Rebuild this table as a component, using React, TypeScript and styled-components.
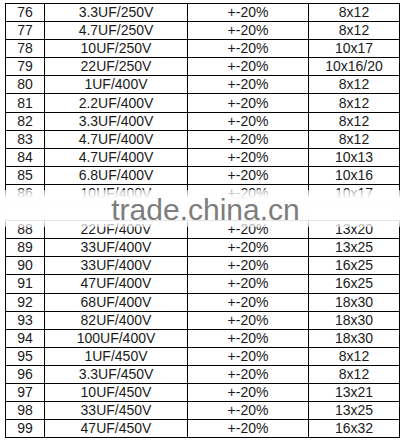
import React from 'react'
import styled, { createGlobalStyle } from 'styled-components'

const GlobalStyle = createGlobalStyle`
  html, body {
    margin: 0;
    padding: 0;
    background: #ffffff;
  }
`

const Page = styled.div`
  position: relative;
  width: 403px;
  height: 443px;
  padding: 3px 0 0 5px;
  box-sizing: border-box;
  overflow: hidden;
  background: #fff;
`

const Table = styled.table`
  border-collapse: collapse;
  table-layout: fixed;
  width: 394px;
  font-family: "Liberation Sans", Arial, sans-serif;
  font-size: 14px;
  color: #1a1a1a;
`

const Row = styled.tr`
  height: 18.1px;
`

const Cell = styled.td`
  border: 1px solid #000;
  padding: 0;
  text-align: center;
  line-height: 17px;
  white-space: nowrap;
`

const Watermark = styled.div`
  position: absolute;
  left: 0;
  right: 0;
  top: 190px;
  height: 37px;
  display: flex;
  align-items: center;
  justify-content: center;
  background: linear-gradient(
    to bottom,
    rgba(255, 255, 255, 0.6) 0%,
    rgba(255, 255, 255, 0.98) 22%,
    rgba(255, 255, 255, 1) 50%,
    rgba(255, 255, 255, 0.98) 78%,
    rgba(255, 255, 255, 0.6) 100%
  );
`

const MarkText = styled.span`
  font-family: "Liberation Sans", Arial, sans-serif;
  font-size: 30px;
  color: #7d7d7d;
  margin-left: 8px;
  margin-top: 2px;
`

const rows: [number, string, string][] = [
  [76, '3.3UF/250V', '8x12'],
  [77, '4.7UF/250V', '8x12'],
  [78, '10UF/250V', '10x17'],
  [79, '22UF/250V', '10x16/20'],
  [80, '1UF/400V', '8x12'],
  [81, '2.2UF/400V', '8x12'],
  [82, '3.3UF/400V', '8x12'],
  [83, '4.7UF/400V', '8x12'],
  [84, '4.7UF/400V', '10x13'],
  [85, '6.8UF/400V', '10x16'],
  [86, '10UF/400V', '10x17'],
  [87, '', ''],
  [88, '22UF/400V', '13x20'],
  [89, '33UF/400V', '13x25'],
  [90, '33UF/400V', '16x25'],
  [91, '47UF/400V', '16x25'],
  [92, '68UF/400V', '18x30'],
  [93, '82UF/400V', '18x30'],
  [94, '100UF/400V', '18x30'],
  [95, '1UF/450V', '8x12'],
  [96, '3.3UF/450V', '8x12'],
  [97, '10UF/450V', '13x21'],
  [98, '33UF/450V', '13x25'],
  [99, '47UF/450V', '16x32'],
]

export default function App() {
  return (
    <>
      <GlobalStyle />
      <Page>
        <Table>
          <colgroup>
            <col style={{ width: 39 }} />
            <col style={{ width: 143 }} />
            <col style={{ width: 121 }} />
            <col style={{ width: 91 }} />
          </colgroup>
          <tbody>
            {rows.map(([no, cap, size]) => (
              <Row key={no}>
                <Cell>{cap ? no : ''}</Cell>
                <Cell>{cap}</Cell>
                <Cell>{cap ? '+-20%' : ''}</Cell>
                <Cell>{size}</Cell>
              </Row>
            ))}
          </tbody>
        </Table>
        <Watermark>
          <MarkText>trade.china.cn</MarkText>
        </Watermark>
      </Page>
    </>
  )
}
